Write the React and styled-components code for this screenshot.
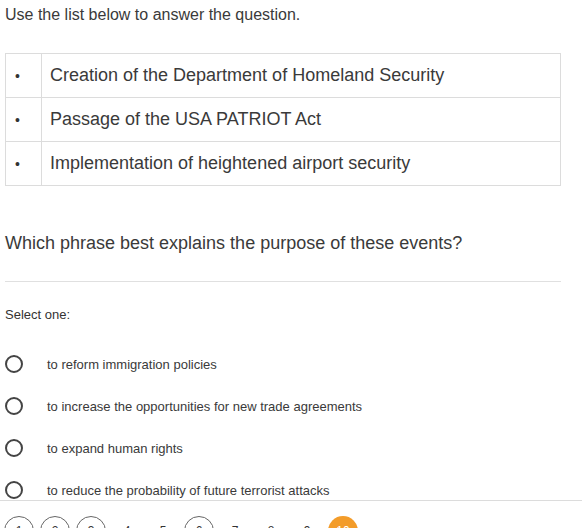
import styled, { createGlobalStyle } from 'styled-components'

const GlobalStyle = createGlobalStyle`
    html, body {
        margin: 0;
        padding: 0;
        background: #ffffff;
        font-family: 'Liberation Sans', Arial, sans-serif;
        color: #333333;
        overflow: hidden;
    }
`

const events = [
    'Creation of the Department of Homeland Security',
    'Passage of the USA PATRIOT Act',
    'Implementation of heightened airport security',
]

const options = [
    'to reform immigration policies',
    'to increase the opportunities for new trade agreements',
    'to expand human rights',
    'to reduce the probability of future terrorist attacks',
]

const pages = [
    { n: 1, kind: 'done' },
    { n: 2, kind: 'done' },
    { n: 3, kind: 'done' },
    { n: 4, kind: 'plain' },
    { n: 5, kind: 'plain' },
    { n: 6, kind: 'done' },
    { n: 7, kind: 'plain' },
    { n: 8, kind: 'plain' },
    { n: 9, kind: 'plain' },
    { n: 10, kind: 'current' },
]

export default function App() {
    return (
        <>
            <GlobalStyle />
            <Page>
                <Question>
                    <Intro>Use the list below to answer the question.</Intro>
                    <EventTable>
                        <tbody>
                            {events.map((text) => (
                                <tr key={text}>
                                    <BulletCell>•</BulletCell>
                                    <TextCell>{text}</TextCell>
                                </tr>
                            ))}
                        </tbody>
                    </EventTable>
                    <Prompt>Which phrase best explains the purpose of these events?</Prompt>
                    <Divider />
                    <SelectLabel>Select one:</SelectLabel>
                </Question>
                <Answers>
                    {options.map((text) => (
                        <Answer key={text}>
                            <Radio />
                            <AnswerText>{text}</AnswerText>
                        </Answer>
                    ))}
                </Answers>
                <Pager>
                    {pages.map(({ n, kind }) => (
                        <PageDot key={n} kind={kind}>{n}</PageDot>
                    ))}
                </Pager>
            </Page>
        </>
    )
}

const Page = styled.div`
    width: 582px;
    height: 528px;
    overflow: hidden;
`

const Question = styled.div`
    width: 556px;
    margin-left: 5px;
`

const Intro = styled.p`
    margin: 0;
    padding-top: 5px;
    font-size: 16px;
    line-height: 20px;
    color: #3a3a3a;
`

const EventTable = styled.table`
    width: 100%;
    margin-top: 28px;
    border-collapse: collapse;
    border: 1px solid #dcdcdc;

    td {
        border: 1px solid #dcdcdc;
        height: 43px;
        padding: 0;
        vertical-align: middle;
    }
`

const BulletCell = styled.td`
    width: 26px;
    padding-left: 9px !important;
    font-size: 14px;
    color: #333;
`

const TextCell = styled.td`
    padding-left: 8px !important;
    font-size: 18px;
    color: #3a3a3a;
`

const Prompt = styled.p`
    margin: 47px 0 0;
    font-size: 18px;
    line-height: 20px;
    color: #3a3a3a;
`

const Divider = styled.hr`
    margin: 28px 0 0;
    border: none;
    border-top: 1px solid #e0e0e0;
`

const SelectLabel = styled.p`
    margin: 26px 0 0;
    font-size: 13px;
    line-height: 14px;
    color: #333;
`

const Answers = styled.div`
    display: flex;
    flex-direction: column;
    gap: 24px;
    margin-top: 33px;
    padding-left: 5px;
    height: 145px;
    overflow: hidden;
`

const Answer = styled.div`
    display: flex;
    align-items: center;
    height: 18px;
    flex-shrink: 0;
`

const Radio = styled.span`
    box-sizing: border-box;
    width: 18px;
    height: 18px;
    border: 2px solid #444;
    border-radius: 50%;
    flex-shrink: 0;
`

const AnswerText = styled.span`
    margin-left: 24px;
    font-size: 13px;
    color: #3a3a3a;
`

const Pager = styled.div`
    border-top: 1px solid #dcdcdc;
    display: flex;
    gap: 6px;
    padding: 15px 0 0 4px;
`

const PageDot = styled.span`
    box-sizing: border-box;
    width: 30px;
    height: 30px;
    border-radius: 50%;
    display: flex;
    align-items: center;
    justify-content: center;
    font-size: 12px;
    color: ${({ kind }) => (kind === 'current' ? '#fff' : '#333')};
    background: ${({ kind }) => (kind === 'current' ? '#f39c2a' : 'transparent')};
    border: 1px solid ${({ kind }) => (kind === 'done' ? '#666' : 'transparent')};
`
